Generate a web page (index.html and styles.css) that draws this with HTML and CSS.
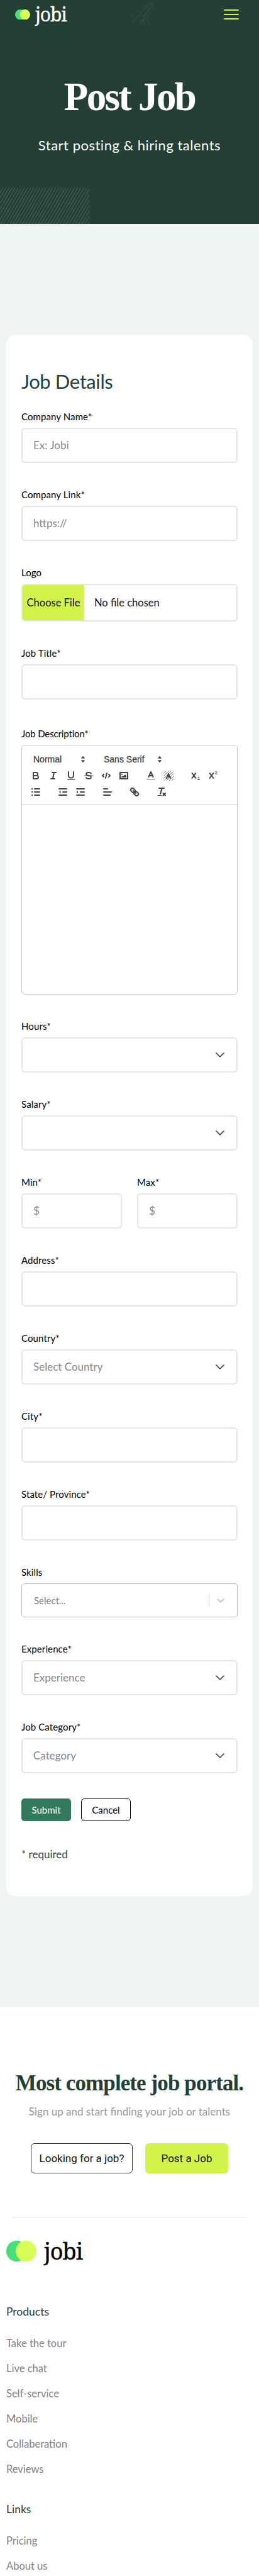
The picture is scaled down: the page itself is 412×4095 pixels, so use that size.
FILE: index.html
```html
<!DOCTYPE html>
<html lang="en">
<head>
<meta charset="utf-8">
<meta name="viewport" content="width=device-width, initial-scale=1">
<title>Post Job</title>
<link rel="stylesheet" href="styles.css">
</head>
<body>
<header class="hero">
  <nav class="nav">
    <a class="logo">
      <svg class="logo-mark" viewBox="0 0 48 33"><circle cx="16.5" cy="16.5" r="16.5" fill="#48df79"/><circle cx="31.5" cy="16.5" r="16.5" fill="#d8ff57"/></svg>
      <span>jobi</span>
    </a>
    <svg class="swoosh" width="40" height="40" viewBox="0 0 40 40" fill="none" stroke="#37534a" stroke-width="1"><path d="M36 4C34 12 28 17 20 26M36 4C27 9 19 15 14 27M31 13L16 38M3 36l11-12M26 31l4 8M20 30l3 9M15 38l16-14"/></svg>
    <svg class="burger" width="24" height="16" viewBox="0 0 24 16" fill="#d2f34c"><rect width="24" height="2" rx="1"/><rect y="7" width="24" height="2" rx="1"/><rect y="14" width="24" height="2" rx="1"/></svg>
  </nav>
  <h1 class="hero-title">Post Job</h1>
  <p class="hero-sub">Start posting &amp; hiring talents</p>
  <div class="stripes"></div>
</header>

<main class="page">
  <form class="card">
    <h2 class="card-title">Job Details</h2>

    <div class="field"><label class="label">Company Name*</label><div class="control"><span>Ex: Jobi</span></div></div>
    <div class="field"><label class="label">Company Link*</label><div class="control"><span>https://</span></div></div>
    <div class="field"><label class="label">Logo</label>
      <div class="control file"><span class="choose"><span>Choose File</span></span><span class="nofile">No file chosen</span></div></div>
    <div class="field"><label class="label">Job Title*</label><div class="control"></div></div>

    <div class="field field-editor"><label class="label tight">Job Description*</label>
      <div class="editor">
        <div class="toolbar">
          <div class="tools">
            <span class="picker pick-size">Normal<svg width="8" height="12" viewBox="0 0 8 12" fill="#444"><path d="M4 .8L7.2 4.7H.8zM4 11.2L.8 7.3h6.4z"/></svg></span>
            <span class="picker pick-font">Sans Serif<svg width="8" height="12" viewBox="0 0 8 12" fill="#444"><path d="M4 .8L7.2 4.7H.8zM4 11.2L.8 7.3h6.4z"/></svg></span>
          </div>
          <div class="tools">
            <svg class="ic" viewBox="0 0 18 18"><path d="M5 4h4.5a2.5 2.5 0 0 1 0 5H5zM5 9h5.5a2.5 2.5 0 0 1 0 5H5z"/></svg>
            <svg class="ic" viewBox="0 0 18 18"><path d="M7 4h6M5 14h6M8 14l2-10"/></svg>
            <svg class="ic" viewBox="0 0 18 18"><path d="M5 3v6a4.012 4.012 0 0 0 8 0V3"/><path class="thin" d="M3.5 15.5h11"/></svg>
            <svg class="ic" viewBox="0 0 18 18"><path class="thin" d="M15.500 9h-13"/><path d="M13 6C12.600 4.700 11 4 9 4 6.700 4 5 5 5 6.500S6.700 8.700 9 9s4 1 4 2.500S11.300 14 9 14c-2 0-3.600-.7-4-2" stroke-width="1.800"/></svg>
            <svg class="ic" viewBox="0 0 18 18"><path d="M5 7L3 9l2 2M13 7l2 2-2 2M10 5l-2 8"/></svg>
            <svg class="ic gap" viewBox="0 0 18 18"><rect x="3" y="4" width="12" height="10"/><circle class="solid" cx="6" cy="7" r="1"/><path class="solid" d="M5 12v-1l2-2 1 1 3-3 2 2v3z"/></svg>
            <svg class="ic" viewBox="0 0 18 18"><path class="faint" d="M3 15h12"/><path d="M5.500 11L9 3l3.500 8M11.600 9H6.400"/></svg>
            <svg class="ic gap" viewBox="0 0 18 18"><path class="hatch" d="M2 5l3-3M2 9l7-7M2 13L13 2M2 17L16 3M6 17L17 6M10 17l7-7M14 17l3-3"/><path d="M6 13l3-7 3 7M11.200 11H6.800"/></svg>
            <svg class="ic" viewBox="0 0 18 18"><path d="M3.500 5l6 8M9.500 5l-6 8"/><path class="thin" d="M12.500 12.200c.2-1.200 2.500-1.200 2.500.2 0 1-2 1.600-2.500 3.100h3"/></svg>
            <svg class="ic" viewBox="0 0 18 18"><path d="M3.500 5l6 8M9.500 5l-6 8"/><path class="thin" d="M12.500 3.200c.2-1.200 2.500-1.200 2.500.2 0 1-2 1.600-2.500 3.100h3"/></svg>
          </div>
          <div class="tools">
            <svg class="ic gap" viewBox="0 0 18 18"><path d="M7 4h8M7 9h8M7 14h8M3 4h.5M3 9h.5M3 14h.5"/></svg>
            <svg class="ic" viewBox="0 0 18 18"><path d="M3 14h12M3 4h12M9 9h6"/><path class="solid" d="M5.500 6.500v5L3 9z"/></svg>
            <svg class="ic gap" viewBox="0 0 18 18"><path d="M3 14h12M3 4h12M9 9h6"/><path class="solid" d="M3 6.500v5L5.500 9z"/></svg>
            <svg class="ic gap" viewBox="0 0 18 18"><path d="M3 9h12M3 14h10M3 4h6"/></svg>
            <svg class="ic gap" viewBox="0 0 18 18"><path d="M7 7l4 4"/><rect x="1.500" y="6.300" width="8" height="5.400" rx="2.700" transform="rotate(45 9 9)"/><rect x="8.500" y="6.300" width="8" height="5.400" rx="2.700" transform="rotate(45 9 9)"/></svg>
            <svg class="ic" viewBox="0 0 18 18"><path d="M5 3h8M9.500 3L7.200 12"/><path class="thin" d="M3 14.500h6"/><path d="M11.500 11l3.500 3.500M15 11l-3.500 3.500"/></svg>
          </div>
        </div>
      </div>
    </div>

    <div class="field"><label class="label">Hours*</label><div class="control select"><span></span><svg class="chev" viewBox="0 0 16 16"><path d="M2 5l6 6 6-6"/></svg></div></div>
    <div class="field"><label class="label">Salary*</label><div class="control select"><span></span><svg class="chev" viewBox="0 0 16 16"><path d="M2 5l6 6 6-6"/></svg></div></div>
    <div class="row">
      <div class="field"><label class="label">Min*</label><div class="control"><span>$</span></div></div>
      <div class="field"><label class="label">Max*</label><div class="control"><span>$</span></div></div>
    </div>
    <div class="field"><label class="label">Address*</label><div class="control"></div></div>
    <div class="field"><label class="label">Country*</label><div class="control select"><span>Select Country</span><svg class="chev" viewBox="0 0 16 16"><path d="M2 5l6 6 6-6"/></svg></div></div>
    <div class="field"><label class="label">City*</label><div class="control"></div></div>
    <div class="field"><label class="label">State/ Province*</label><div class="control"></div></div>
    <div class="field"><label class="label">Skills</label>
      <div class="control multi"><span>Select...</span><i class="bar"></i><svg width="20" height="20" viewBox="0 0 20 20" fill="#ccc"><path d="M4.516 7.548c.436-.446 1.043-.481 1.576 0L10 11.295l3.908-3.747c.533-.481 1.141-.446 1.574 0 .436.445.408 1.197 0 1.615-.406.418-4.695 4.502-4.695 4.502a1.095 1.095 0 0 1-1.576 0S4.924 9.581 4.516 9.163s-.436-1.170 0-1.615z"/></svg></div></div>
    <div class="field"><label class="label">Experience*</label><div class="control select"><span>Experience</span><svg class="chev" viewBox="0 0 16 16"><path d="M2 5l6 6 6-6"/></svg></div></div>
    <div class="field"><label class="label">Job Category*</label><div class="control select"><span>Category</span><svg class="chev" viewBox="0 0 16 16"><path d="M2 5l6 6 6-6"/></svg></div></div>

    <div class="actions"><button type="button" class="btn submit">Submit</button><button type="button" class="btn cancel">Cancel</button></div>
    <p class="required">* required</p>
  </form>
</main>

<section class="cta">
  <h2 class="cta-title">Most complete job portal.</h2>
  <p class="cta-sub">Sign up and start finding your job or talents</p>
  <div class="cta-buttons"><a class="cta-btn look">Looking for a job?</a><a class="cta-btn post">Post a Job</a></div>
</section>

<footer class="footer">
  <a class="logo logo-big">
    <svg class="logo-mark" viewBox="0 0 48 33"><circle cx="16.5" cy="16.5" r="16.5" fill="#48df79"/><circle cx="31.5" cy="16.5" r="16.5" fill="#d8ff57"/></svg>
    <span>jobi</span>
  </a>
  <h3 class="foot-title">Products</h3>
  <ul class="foot-list"><li>Take the tour</li><li>Live chat</li><li>Self-service</li><li>Mobile</li><li>Collaberation</li><li>Reviews</li></ul>
  <h3 class="foot-title">Links</h3>
  <ul class="foot-list"><li>Pricing</li><li>About us</li></ul>
</footer>
</body>
</html>
```
FILE: styles.css
```css
* { box-sizing: border-box; margin: 0; padding: 0; }
html, body { height: 4095px; overflow: hidden; }
body { width: 412px; background: #fff; color: #000; font-family: Lato, "Noto Sans", sans-serif; }
svg { display: block; }

.hero { position: relative; height: 356px; background: #244034; text-align: center; color: #fff; }
.nav { display: flex; justify-content: space-between; align-items: flex-start; height: 46px; padding: 0 32px 0 24px; }
.logo { display: flex; align-items: center; color: #fff; font-family: "Noto Serif", "Liberation Serif", serif; }
.nav .logo { gap: 8px; height: 46px; font-size: 30px; letter-spacing: -1.2px; -webkit-text-stroke: 0.3px; }
.nav .logo-mark { width: 24px; height: 16.5px; }
.nav .logo span { line-height: 46px; }
.swoosh { margin-left: -8px; }
.burger { margin-top: 15px; }
.hero-title { margin-top: 68px; font: bold 63px/80px "Liberation Serif", serif; letter-spacing: -2.6px; }
.hero-sub { margin-top: 21px; font-size: 22px; line-height: 32px; letter-spacing: 0.5px; }
.stripes { position: absolute; left: 0; bottom: 0; width: 142px; height: 57px; background: repeating-linear-gradient(120deg, #244034 0 2.9px, #456458 3.3px 3.8px, #244034 4.3px); }

.page { height: 2834px; padding: 176px 10px 0; background: #eff5f3; }
.card { height: 2482px; padding: 54px 24px 0; background: #fff; border-radius: 15px; }
.card-title { margin-bottom: 26px; color: #244034; font-size: 31px; line-height: 40px; font-weight: 400; letter-spacing: -0.4px; }
.field { margin-bottom: 40px; }
.label { display: block; margin-bottom: 8px; font-size: 15px; line-height: 20px; letter-spacing: 0.1px; white-space: nowrap; }
.label.tight { letter-spacing: -0.15px; }
.control { display: flex; align-items: center; height: 56px; padding: 0 17px; border: 2px solid #e5e5e5; border-radius: 6px; color: #888; font-size: 17px; line-height: 24px; }
.select { justify-content: space-between; }
.chev { width: 16px; height: 16px; margin-right: 1px; fill: none; stroke: #343a40; stroke-width: 1.6; stroke-linecap: round; stroke-linejoin: round; }
.row { display: grid; grid-template-columns: 1fr 1fr; gap: 24px; }
.file { height: 60px; padding: 0; color: #111; font-size: 16.5px; overflow: hidden; }
.choose { display: flex; align-items: center; justify-content: center; width: 98px; height: 58px; background: #d2f34c; border-radius: 3px; }
.nofile { margin-left: 16px; }
.multi { height: 54px; padding: 0 16px 0 19px; border: 1px solid #bbb; border-radius: 5px; color: #808080; font-size: 15px; }
.multi span { flex: 1; }
.bar { width: 1px; height: 18px; margin-right: 8px; background: #ccc; }

.field-editor { padding-top: 4px; }
.editor { height: 397px; border: 1px solid #c4c4c4; border-radius: 6px; }
.toolbar { height: 95px; padding: 9px 13px 0; border-bottom: 1px solid #c4c4c4; }
.tools { display: flex; height: 26px; align-items: center; }
.ic { flex: none; width: 18px; height: 18px; margin-right: 10px; fill: none; stroke: #444; stroke-width: 2; stroke-linecap: round; stroke-linejoin: round; }
.ic.gap { margin-right: 25px; }
.ic .thin { stroke-width: 1; }
.ic .solid { fill: #444; stroke: none; }
.ic .faint { stroke-opacity: 0.4; }
.ic .hatch { stroke-width: 1; stroke-opacity: 0.7; }
.picker { display: flex; align-items: center; justify-content: space-between; color: #444; font: 14px/24px "Liberation Sans", sans-serif; -webkit-text-stroke: 0.3px #444; }
.pick-size { width: 83px; margin-left: 5px; }
.pick-font { width: 93px; margin-left: 29px; }

.actions { display: flex; gap: 16px; }
.btn { width: 79px; height: 36px; border-radius: 5px; font: 15px/20px Lato, sans-serif; }
.submit { border: 0; background: #31795a; color: #fff; }
.cancel { border: 1px solid #000; background: #fff; color: #000; }
.required { margin-top: 40px; color: #444; font-size: 17px; line-height: 26px; }

.cta { height: 336px; margin: 0 20px; padding-top: 100px; border-bottom: 2px solid #f2f2f2; text-align: center; }
.cta-title { margin: 0 -10px; color: #244034; font: bold 35px/44px "Liberation Serif", serif; letter-spacing: -0.9px; white-space: nowrap; }
.cta-sub { margin-top: 11px; color: #999; font-size: 17px; line-height: 24px; white-space: nowrap; }
.cta-buttons { display: flex; justify-content: center; gap: 20px; margin-top: 38px; }
.cta-btn { height: 48px; border-radius: 6px; color: #111; font: 17px/46px Roboto, sans-serif; }
.look { width: 162px; border: 1px solid #333; }
.post { width: 132px; background: #d2f34c; line-height: 48px; }

.footer { padding: 22px 10px 0; }
.logo-big { gap: 12px; height: 60px; color: #000; font-size: 36px; letter-spacing: -1px; -webkit-text-stroke: 0.4px; }
.logo-big .logo-mark { width: 48px; height: 33px; }
.foot-title { margin-top: 53px; color: #244034; font-size: 17.5px; line-height: 28px; font-weight: 400; }
.foot-list { margin-top: 16px; list-style: none; color: #828282; font-size: 16.5px; line-height: 40px; }
.foot-list + .foot-title { margin-top: 30px; }
```
